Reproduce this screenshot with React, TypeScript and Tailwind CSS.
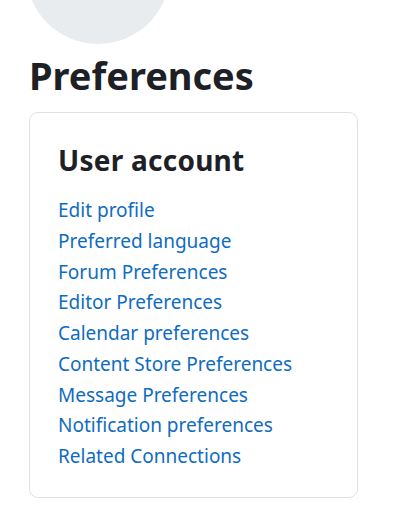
const links = [
  'Edit profile',
  'Preferred language',
  'Forum Preferences',
  'Editor Preferences',
  'Calendar preferences',
  'Content Store Preferences',
  'Message Preferences',
  'Notification preferences',
  'Related Connections',
]

const App = () => {
  return (
    <div className="min-h-[530px] bg-white overflow-hidden font-['Noto_Sans',sans-serif] text-[#1d2125]">
      <div className="px-[29px]">
        {/* avatar */}
        <div className="w-[144px] h-[144px] -mt-[100px] -ml-[3px] rounded-full bg-[#e9ecef]" />

        <h2 className="mt-[8px] text-[38px] leading-[46px] font-bold">Preferences</h2>

        {/* card */}
        <div className="mt-[14px] w-[329px] border border-[#dee2e6] rounded-[9px] px-[28px] pt-[30px] pb-[25px]">
          <h3 className="text-[28px] leading-[34px] font-bold tracking-[0.25px]">User account</h3>
          <ul className="mt-[18px]">
            {links.map((link) => (
              <li key={link} className="text-[19px] leading-[30.75px] text-[#0f6cbf]">
                <a href="#">{link}</a>
              </li>
            ))}
          </ul>
        </div>
      </div>
    </div>
  )
}

export default App
